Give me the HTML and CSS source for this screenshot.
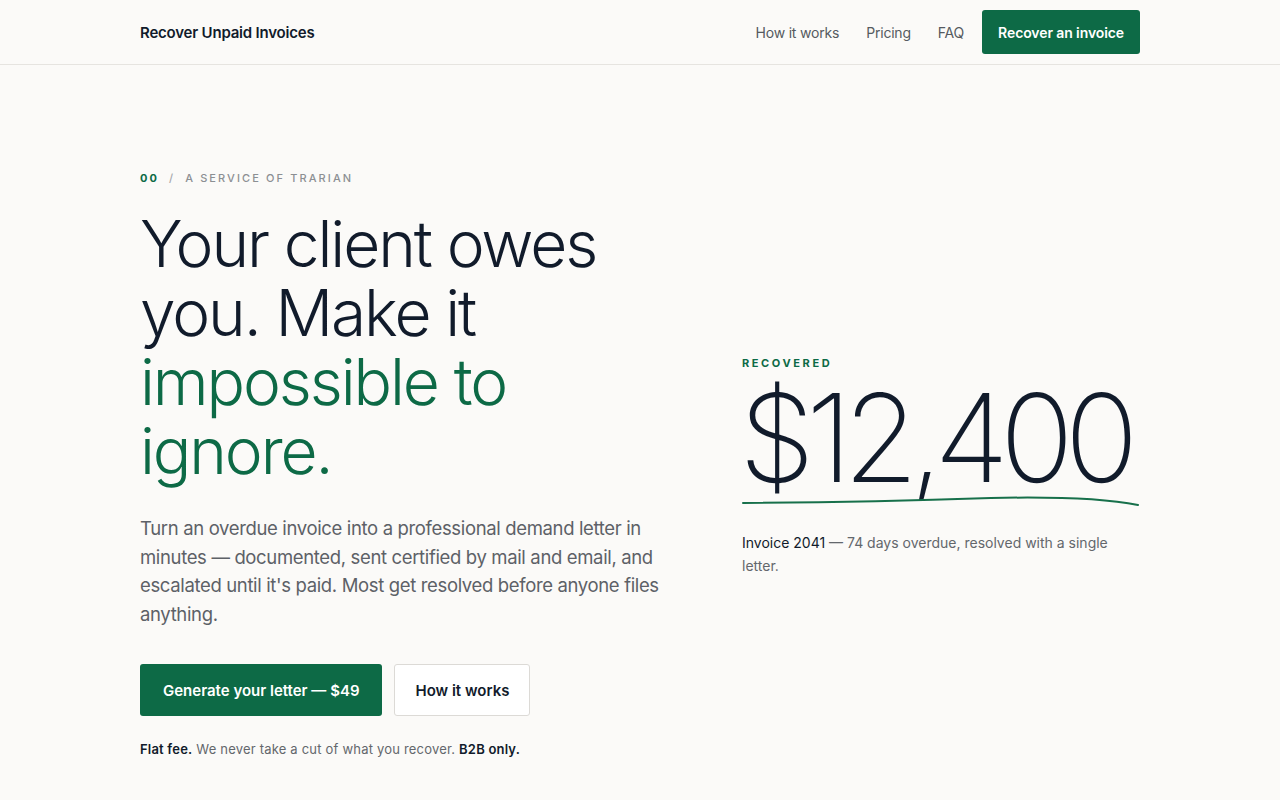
FILE: index.html
```html
<!DOCTYPE html>
<html lang="en">
<head>
<meta charset="utf-8">
<title>Recover Unpaid Invoices</title>
<link rel="stylesheet" href="styles.css">
</head>
<body>
<header class="site-header">
  <div class="container header-inner">
    <a class="logo" href="#">Recover Unpaid Invoices</a>
    <nav class="nav">
      <ul class="nav-links">
        <li><a href="#">How it works</a></li>
        <li><a href="#">Pricing</a></li>
        <li><a href="#">FAQ</a></li>
      </ul>
      <a class="btn btn-primary btn-sm" href="#">Recover an invoice</a>
    </nav>
  </div>
</header>
<main class="container hero">
  <section class="hero-copy">
    <p class="eyebrow"><span class="eyebrow-num">00</span><span class="eyebrow-sep">/</span><span>A SERVICE OF TRARIAN</span></p>
    <h1 class="headline">Your client owes you. Make it <span class="accent">impossible to ignore.</span></h1>
    <p class="lede">Turn an overdue invoice into a professional demand letter in minutes — documented, sent certified by mail and email, and escalated until it's paid. Most get resolved before anyone files anything.</p>
    <div class="actions">
      <a class="btn btn-primary btn-lg" href="#">Generate your letter — $49</a>
      <a class="btn btn-ghost btn-lg" href="#">How it works</a>
    </div>
    <p class="fineprint"><strong>Flat fee.</strong> We never take a cut of what you recover. <strong>B2B only.</strong></p>
  </section>
  <aside class="stat">
    <p class="stat-label">RECOVERED</p>
    <p class="stat-value">$12,400</p>
    <svg class="squiggle" viewBox="0 0 400 14" preserveAspectRatio="none" aria-hidden="true">
      <path d="M1,9 C80,8.5 160,7 250,4 C320,2.5 365,4.5 398,11" fill="none" stroke="#17704b" stroke-width="2" stroke-linecap="round"/>
    </svg>
    <p class="stat-caption"><span class="dark">Invoice 2041</span> — 74 days overdue, resolved with a single letter.</p>
  </aside>
</main>
</body>
</html>
```
FILE: styles.css
```css
* { box-sizing: border-box; }
html, body { margin: 0; padding: 0; }
body {
  background: #fbfaf8;
  color: #111b2b;
  font-family: Inter, "Noto Sans", sans-serif;
  -webkit-font-smoothing: antialiased;
}
a { text-decoration: none; color: inherit; }
p { margin: 0; }
.container { width: 1000px; margin: 0 auto; }

.site-header { border-bottom: 1px solid #e6e4e0; }
.header-inner {
  height: 64px;
  display: flex;
  align-items: center;
  justify-content: space-between;
}
.logo { font-size: 15px; font-weight: 600; color: #111b2b; letter-spacing: -0.2px; }
.nav { display: flex; align-items: center; gap: 18px; }
.nav-links { list-style: none; margin: 0; padding: 0; display: flex; gap: 27px; }
.nav-links a { font-size: 14px; color: #555a60; letter-spacing: -0.2px; }

.btn {
  display: inline-flex;
  align-items: center;
  justify-content: center;
  border-radius: 3px;
  font-weight: 600;
}
.btn-primary { background: #0d6a46; color: #fff; }
.btn-sm { height: 44px; padding: 0 16px; font-size: 14px; letter-spacing: -0.1px; }
.btn-lg { height: 52px; padding: 0 23px; font-size: 15px; }
.btn-ghost { background: #fff; border: 1px solid #dcdad6; color: #111b2b; padding: 0 20px; }

.hero {
  display: grid;
  grid-template-columns: 545px 398px;
  justify-content: space-between;
  align-items: center;
  padding-top: 106px;
}
.eyebrow {
  font-size: 11px;
  letter-spacing: 2.1px;
  color: #8c8f93;
  font-weight: 500;
  display: flex;
  gap: 10px;
}
.eyebrow-num { color: #0d6a46; font-weight: 700; }
.eyebrow-sep { color: #a5a7aa; }

.headline {
  margin: 24px 0 0;
  font-size: 64px;
  font-weight: 300;
  line-height: 69px;
  letter-spacing: -2.1px;
  color: #111b2b;
  max-width: 470px;
}
.accent { color: #0d6a46; }

.lede {
  margin-top: 29px;
  font-size: 18.5px;
  line-height: 28.5px;
  color: #5d6167;
  letter-spacing: -0.35px;
}
.actions { display: flex; gap: 12px; margin-top: 36px; }
.fineprint {
  margin-top: 25px;
  font-size: 13px;
  color: #63676c;
  letter-spacing: 0.2px;
}
.fineprint strong { color: #111b2b; font-weight: 600; }

.stat { padding-top: 5px; }
.stat-label {
  font-size: 11px;
  font-weight: 700;
  letter-spacing: 2.6px;
  color: #0d6a46;
}
.stat-value {
  font-size: 122px;
  font-weight: 200;
  line-height: 118px;
  letter-spacing: -9px;
  color: #111b2b;
  margin-left: -3px;
  margin-top: 9px;
}
.squiggle { display: block; width: 398px; height: 14px; margin-top: -3px; }
.stat-caption {
  margin-top: 23px;
  font-size: 14px;
  line-height: 23px;
  color: #63676c;
}
.dark { color: #111b2b; }
```
